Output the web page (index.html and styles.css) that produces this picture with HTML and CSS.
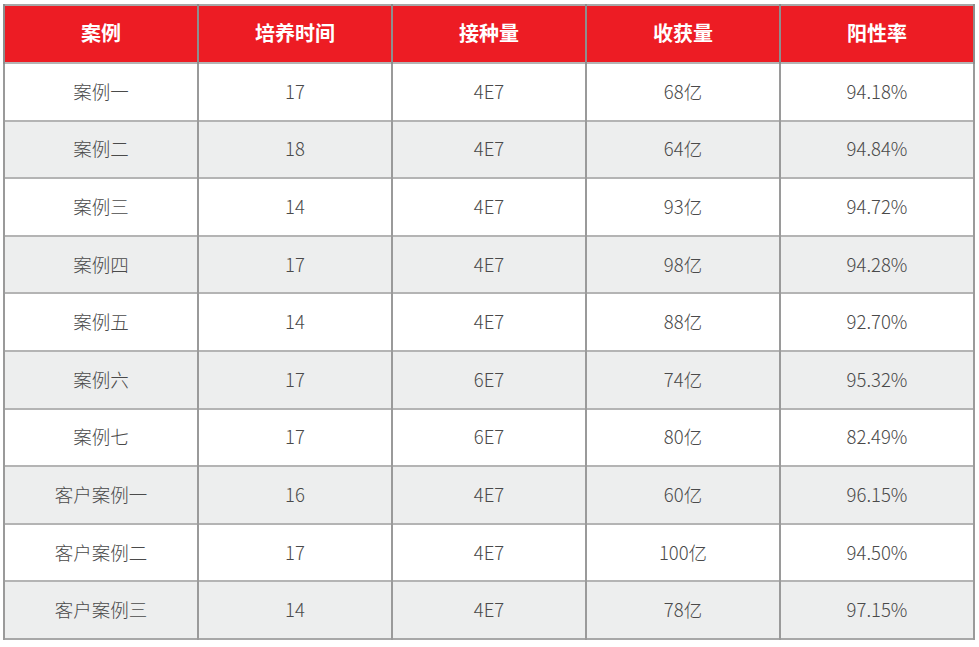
FILE: index.html
```html
<!DOCTYPE html>
<html lang="zh-CN">
<head>
<meta charset="utf-8">
<link rel="stylesheet" href="styles.css">
</head>
<body>
<table class="data">
  <colgroup><col><col><col><col><col></colgroup>
  <thead>
    <tr><th>案例</th><th>培养时间</th><th>接种量</th><th>收获量</th><th>阳性率</th></tr>
  </thead>
  <tbody>
    <tr><td>案例一</td><td>17</td><td>4E7</td><td>68亿</td><td>94.18%</td></tr>
    <tr><td>案例二</td><td>18</td><td>4E7</td><td>64亿</td><td>94.84%</td></tr>
    <tr><td>案例三</td><td>14</td><td>4E7</td><td>93亿</td><td>94.72%</td></tr>
    <tr><td>案例四</td><td>17</td><td>4E7</td><td>98亿</td><td>94.28%</td></tr>
    <tr><td>案例五</td><td>14</td><td>4E7</td><td>88亿</td><td>92.70%</td></tr>
    <tr><td>案例六</td><td>17</td><td>6E7</td><td>74亿</td><td>95.32%</td></tr>
    <tr><td>案例七</td><td>17</td><td>6E7</td><td>80亿</td><td>82.49%</td></tr>
    <tr><td>客户案例一</td><td>16</td><td>4E7</td><td>60亿</td><td>96.15%</td></tr>
    <tr><td>客户案例二</td><td>17</td><td>4E7</td><td>100亿</td><td>94.50%</td></tr>
    <tr><td>客户案例三</td><td>14</td><td>4E7</td><td>78亿</td><td>97.15%</td></tr>
  </tbody>
</table>
</body>
</html>
```
FILE: styles.css
```css
html, body {
  margin: 0;
  padding: 0;
  background: #ffffff;
}
body {
  padding: 4px 0 0 3px;
  font-family: "Noto Sans CJK SC", "Noto Sans", sans-serif;
}
.data {
  border-collapse: collapse;
  table-layout: fixed;
  width: 971px;
  border: 2px solid #a7a7a7;
}
.data col {
  width: 194px;
}
.data thead tr {
  height: 58px;
}
.data tbody tr {
  height: 57.6px;
}
.data th {
  background: #ed1c24;
  color: #ffffff;
  font-size: 20px;
  font-weight: 700;
  line-height: 24px;
  padding: 0 0 2px;
  text-align: center;
  vertical-align: middle;
  border-left: 2px solid #8e8e8e;
  border-right: 2px solid #8e8e8e;
}
.data td {
  color: #4a4a4a;
  font-size: 18.5px;
  font-weight: 300;
  line-height: 24px;
  padding: 0 0 2px;
  text-align: center;
  vertical-align: middle;
  border-top: 2px solid #b4b4b4;
  border-left: 2px solid #9a9a9a;
  border-right: 2px solid #9a9a9a;
}
.data tbody tr:nth-child(even) td {
  background: #edeeee;
}
```
